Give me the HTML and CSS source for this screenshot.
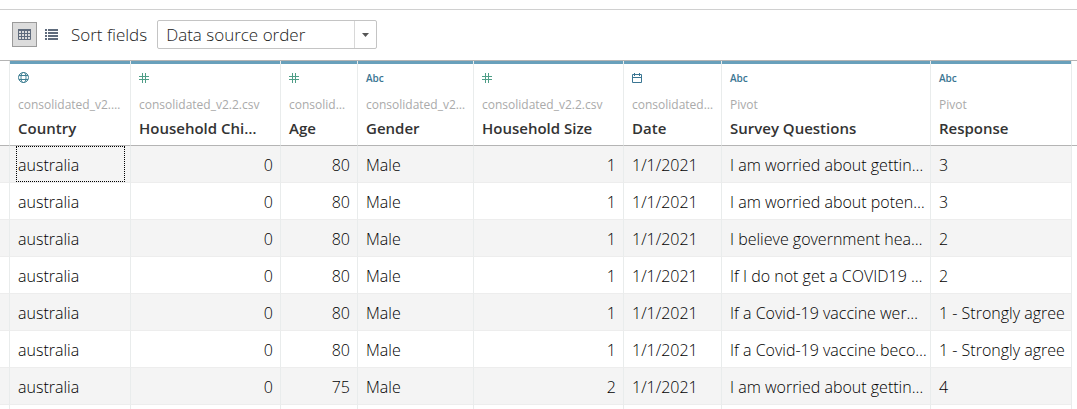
FILE: index.html
```html
<!DOCTYPE html>
<html lang="en">
<head>
<meta charset="utf-8">
<title>Data source</title>
<link rel="stylesheet" href="styles.css">
</head>
<body>
<svg class="sprite" aria-hidden="true">
  <symbol id="globe" viewBox="0 0 12 12"><g fill="none" stroke="currentColor" stroke-width="1"><circle cx="5.500" cy="5.500" r="5"/><ellipse cx="5.500" cy="5.500" rx="2.500" ry="5"/><path d="M1 3.500h9M1 7.500h9"/></g></symbol>
  <symbol id="number" viewBox="0 0 12 12"><path d="M3.500 1v10M6.500 1v10M0 4.500h10M0 7.500h10" fill="none" stroke="currentColor" stroke-width="1"/></symbol>
  <symbol id="date" viewBox="0 0 12 12"><path d="M0.500 2.500h9v8h-9zM0.500 5.500h9M2.500 1v3M7.500 1v3" fill="none" stroke="currentColor" stroke-width="1"/></symbol>
</svg>
<header class="toolbar">
  <button class="view view-active" type="button" aria-label="Grid view" aria-pressed="true">
    <svg width="13" height="11" viewBox="0 0 13 11"><path d="M.5 1h12v9.500h-12zM1 4.500h11M1 7.500h11M3.500 1v9M6.500 1v9M9.500 1v9" fill="none" stroke="#5f6b7c"/><path d="M0 0h13v2H0z" fill="#5f6b7c"/></svg>
  </button>
  <button class="view" type="button" aria-label="List view" aria-pressed="false">
    <svg width="13" height="11" viewBox="0 0 13 11"><path d="M0 0h2v2H0zM3 0h10v2H3zM0 3h2v2H0zM3 3h10v2H3zM0 6h2v2H0zM3 6h10v2H3zM0 9h2v2H0zM3 9h10v2H3z" fill="#5f6b7c"/></svg>
  </button>
  <label class="sort-label" for="sort">Sort fields</label>
  <span class="select">
    <select id="sort"><option>Data source order</option></select>
    <svg class="caret" width="7" height="4" viewBox="0 0 7 4" aria-hidden="true"><path d="M0 0h7L3.500 4z" fill="#555"/></svg>
  </span>
</header>
<table class="grid">
  <colgroup><col class="w-edge"><col class="w-country"><col class="w-children"><col class="w-age"><col class="w-gender"><col class="w-size"><col class="w-date"><col class="w-question"><col class="w-response"><col></colgroup>
  <thead>
    <tr>
      <td class="edge"></td>
      <th scope="col"><svg class="type globe"><use href="#globe"/></svg><span class="source">consolidated_v2.…</span><span class="name">Country</span></th>
      <th scope="col"><svg class="type number"><use href="#number"/></svg><span class="source">consolidated_v2.2.csv</span><span class="name">Household Chi…</span></th>
      <th scope="col"><svg class="type number"><use href="#number"/></svg><span class="source">consolid…</span><span class="name">Age</span></th>
      <th scope="col"><span class="type text">Abc</span><span class="source">consolidated_v2…</span><span class="name">Gender</span></th>
      <th scope="col"><svg class="type number"><use href="#number"/></svg><span class="source">consolidated_v2.2.csv</span><span class="name">Household Size</span></th>
      <th scope="col"><svg class="type date"><use href="#date"/></svg><span class="source">consolidated…</span><span class="name">Date</span></th>
      <th scope="col"><span class="type text">Abc</span><span class="source">Pivot</span><span class="name">Survey Questions</span></th>
      <th scope="col"><span class="type text">Abc</span><span class="source">Pivot</span><span class="name">Response</span></th>
      <td class="rest"></td>
    </tr>
  </thead>
  <tbody>
    <tr><td></td><td class="focused">australia</td><td class="num">0</td><td class="num">80</td><td>Male</td><td class="num">1</td><td>1/1/2021</td><td>I am worried about gettin…</td><td>3</td><td class="rest"></td></tr>
    <tr><td></td><td>australia</td><td class="num">0</td><td class="num">80</td><td>Male</td><td class="num">1</td><td>1/1/2021</td><td>I am worried about poten…</td><td>3</td><td class="rest"></td></tr>
    <tr><td></td><td>australia</td><td class="num">0</td><td class="num">80</td><td>Male</td><td class="num">1</td><td>1/1/2021</td><td>I believe government hea…</td><td>2</td><td class="rest"></td></tr>
    <tr><td></td><td>australia</td><td class="num">0</td><td class="num">80</td><td>Male</td><td class="num">1</td><td>1/1/2021</td><td>If I do not get a COVID19 …</td><td>2</td><td class="rest"></td></tr>
    <tr><td></td><td>australia</td><td class="num">0</td><td class="num">80</td><td>Male</td><td class="num">1</td><td>1/1/2021</td><td>If a Covid-19 vaccine wer…</td><td>1 - Strongly agree</td><td class="rest"></td></tr>
    <tr><td></td><td>australia</td><td class="num">0</td><td class="num">80</td><td>Male</td><td class="num">1</td><td>1/1/2021</td><td>If a Covid-19 vaccine beco…</td><td>1 - Strongly agree</td><td class="rest"></td></tr>
    <tr><td></td><td>australia</td><td class="num">0</td><td class="num">75</td><td>Male</td><td class="num">2</td><td>1/1/2021</td><td>I am worried about gettin…</td><td>4</td><td class="rest"></td></tr>
  </tbody>
  <tfoot>
    <tr><td></td><td></td><td></td><td></td><td></td><td></td><td></td><td></td><td></td><td class="rest"></td></tr>
  </tfoot>
</table>
</body>
</html>
```
FILE: styles.css
```css
* { box-sizing: border-box; }

body {
  margin: 0;
  padding-top: 9px;
  background: #fff;
  color: #000;
  font-family: "Open Sans", "Noto Sans", sans-serif;
  font-size: 16px;
  font-weight: 300;
}

.sprite { display: none; }

.toolbar {
  display: flex;
  align-items: center;
  height: 52px;
  padding: 0 0 2px 12px;
  border-top: 1px solid #d0d0d0;
  border-bottom: 1px solid #b4b4b4;
}

.view {
  display: flex;
  align-items: center;
  justify-content: center;
  width: 29px;
  height: 25px;
  padding: 0;
  border: 1px solid transparent;
  background: none;
}

.view-active {
  width: 25px;
  border-color: #9b9b9b;
  background: #dcdcdc;
}

.sort-label {
  margin: 0 10px 0 5px;
  color: #222;
  font-size: 17px;
}

.select {
  position: relative;
  width: 220px;
  height: 29px;
}

.select select {
  width: 100%;
  height: 100%;
  padding: 0 30px 0 8px;
  border: 1px solid #c4c4c4;
  border-radius: 2px;
  appearance: none;
  background: linear-gradient(#d8d8d8, #d8d8d8) right 21px top / 1px 100% no-repeat #fff;
  color: #222;
  font-family: inherit;
  font-size: 17px;
  font-weight: 300;
}

.caret {
  position: absolute;
  top: 13px;
  right: 8px;
  pointer-events: none;
}

.grid {
  width: 100%;
  table-layout: fixed;
  border-collapse: separate;
  border-spacing: 0;
}

.w-edge { width: 10px; }
.w-country { width: 121px; }
.w-children { width: 150px; }
.w-age { width: 77px; }
.w-gender { width: 116px; }
.w-size { width: 150px; }
.w-date { width: 98px; }
.w-question { width: 209px; }
.w-response { width: 141px; }

.grid th,
.grid td {
  padding: 0 0 0 8px;
  border-right: 1px solid #e9ecec;
  text-align: left;
  white-space: nowrap;
}

.grid thead th,
.grid thead td {
  height: 85px;
  border-bottom: 1px solid #b4b4b4;
}

.grid thead th {
  padding-top: 8px;
  background: linear-gradient(#68a0bb, #68a0bb) top / 100% 3px no-repeat;
  vertical-align: top;
}

.type {
  display: block;
  width: 12px;
  height: 12px;
  margin-top: 3px;
}

.globe { color: #3f7f93; }
.number { color: #4f9e87; }
.date, .text { color: #3b7693; }

.text {
  font-size: 10px;
  font-weight: 600;
  line-height: 12px;
}

.source {
  display: block;
  margin-top: 11px;
  color: #aaa;
  font-size: 12px;
  font-weight: 400;
  line-height: 20px;
}

.name {
  display: block;
  margin-top: 2px;
  color: #333;
  font-size: 15px;
  font-weight: 600;
  line-height: 22px;
}

.grid tbody td {
  height: 37px;
  padding-top: 2px;
  border-bottom: 1px solid #ededed;
}

.grid tbody tr:nth-child(odd) td { background: #f4f4f4; }

.grid tbody .num {
  padding: 2px 7px 0 0;
  text-align: right;
}

.focused { position: relative; }

.focused::after {
  content: "";
  position: absolute;
  inset: 0 5px 0 6px;
  border: 1px dotted #000;
}

.grid tfoot td { height: 4px; }

.grid .rest,
.grid tbody tr:nth-child(odd) .rest {
  border-right: 0;
  background: #fff;
}

.grid tbody .rest { border-bottom: 0; }
```
